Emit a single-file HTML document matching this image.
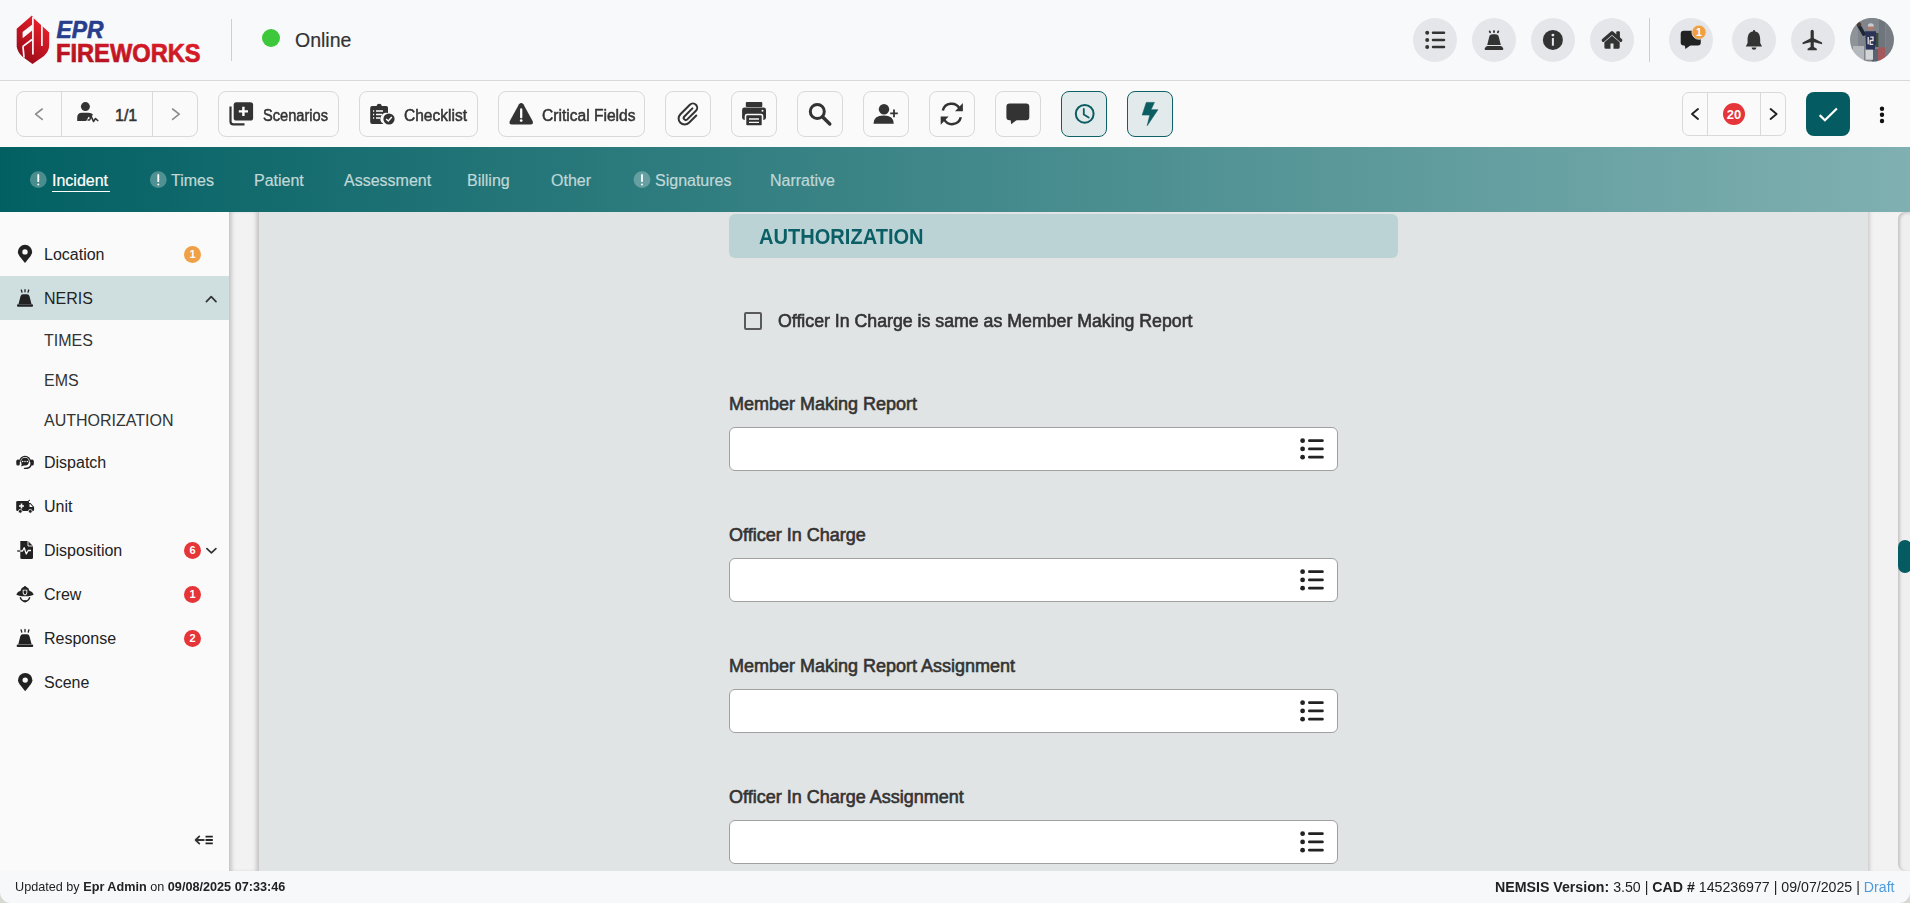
<!DOCTYPE html>
<html><head><meta charset="utf-8">
<style>
*{box-sizing:border-box;margin:0;padding:0}
html,body{width:1910px;height:903px;overflow:hidden;background:#d8d8d2;font-family:"Liberation Sans",sans-serif;color:#222}
.abs{position:absolute;white-space:nowrap;line-height:1}
#header{position:absolute;left:0;top:0;width:1910px;height:81px;background:#f8f9fb;border-bottom:1px solid #d9d9d9}
#toolbar{position:absolute;left:0;top:81px;width:1910px;height:66px;background:#fafafa}
#nav{position:absolute;left:0;top:147px;width:1910px;height:65px;background:linear-gradient(90deg,#026063 0%,#80b0b1 100%)}
#sidebar{position:absolute;left:0;top:212px;width:229px;height:659px;background:#fafafa}
#gutter{position:absolute;left:229px;top:212px;width:30px;height:659px;background:#f2f2f2;box-shadow:inset 5px 0 5px -3px #b9b9b9, inset -5px 0 5px -3px #b9b9b9}
#content{position:absolute;left:259px;top:212px;width:1609px;height:659px;background:#e0e4e5}
#rgutter{position:absolute;left:1868px;top:212px;width:42px;height:659px;background:#f2f2f2;box-shadow:inset 4px 0 4px -3px #bdbdbd}
#track{position:absolute;left:1898px;top:212px;width:16px;height:659px;border-radius:7px;background:#efefef;box-shadow:inset 2px 1px 3px 0 #c4c4c4}
#thumb{position:absolute;left:1898px;top:540px;width:14px;height:33px;border-radius:7px;background:#045c62}
#footer{position:absolute;left:0;top:871px;width:1910px;height:32px;background:#f7f8fa;border-radius:0 0 11px 11px}
.btn{position:absolute;top:91px;height:46px;border:1px solid #d9d9d9;border-radius:8px;background:#fafafa}
.tab{position:absolute;top:173px;font-size:16px;line-height:1;color:#c0d8d8;white-space:nowrap;-webkit-text-stroke:0.2px currentColor}
.side{position:absolute;left:44px;font-size:16px;line-height:1;color:#222;white-space:nowrap}
.sub{color:#333}
.lbl{position:absolute;left:729px;font-size:18px;line-height:1;color:#333;white-space:nowrap;-webkit-text-stroke:0.6px #333}
.inp{position:absolute;left:729px;width:609px;height:44px;background:#fff;border:1px solid #a0a0a0;border-radius:6px}
.circ{position:absolute;top:18px;width:44px;height:44px;border-radius:50%;background:#e4e6ea}
.bt{position:absolute;top:107.5px;font-size:16px;line-height:1;color:#333;white-space:nowrap;-webkit-text-stroke:0.5px #333;transform-origin:0 0}
.badge{position:absolute;width:17px;height:17px;border-radius:50%;color:#fff;font-size:11px;font-weight:700;line-height:17px;text-align:center}
</style></head><body>
<div id="header"></div>
<div id="toolbar"></div>
<div id="nav"></div>
<div id="sidebar"></div>
<div id="gutter"></div>
<div id="content"></div>
<div id="rgutter"></div>
<div id="track"></div>
<div id="thumb"></div>
<div id="footer"></div>

<!-- header -->
<div class="abs" style="left:231px;top:19px;width:1px;height:42px;background:#cfcfcf"></div>
<div class="abs" style="left:262px;top:29px;width:18px;height:18px;border-radius:50%;background:#3cc83a"></div>
<div class="abs" style="left:295px;top:30.5px;font-size:19.5px;color:#333;-webkit-text-stroke:0.2px #333">Online</div>
<div class="circ" style="left:1413px"></div>
<div class="circ" style="left:1472px"></div>
<div class="circ" style="left:1531px"></div>
<div class="circ" style="left:1590px"></div>
<div class="abs" style="left:1649px;top:18px;width:1px;height:44px;background:#cfcfcf"></div>
<div class="circ" style="left:1669px"></div>
<div class="circ" style="left:1732px"></div>
<div class="circ" style="left:1791px"></div>


<!-- toolbar -->
<div class="btn" style="left:16px;width:182px"></div>
<div class="abs" style="left:61px;top:91px;width:1px;height:46px;background:#d9d9d9"></div>
<div class="abs" style="left:152px;top:91px;width:1px;height:46px;background:#d9d9d9"></div>
<div class="btn" style="left:218px;width:121px"></div>
<div class="btn" style="left:359px;width:119px"></div>
<div class="btn" style="left:498px;width:147px"></div>
<div class="btn" style="left:665px;width:46px"></div>
<div class="btn" style="left:731px;width:46px"></div>
<div class="btn" style="left:797px;width:46px"></div>
<div class="btn" style="left:863px;width:46px"></div>
<div class="btn" style="left:929px;width:46px"></div>
<div class="btn" style="left:995px;width:46px"></div>
<div class="btn" style="left:1061px;width:46px;background:#e3eaeb;border:1.3px solid #0e6166"></div>
<div class="btn" style="left:1127px;width:46px;background:#e3eaeb;border:1.3px solid #0e6166"></div>
<div class="btn" style="left:1682px;top:92px;width:104px;height:43.5px;border-radius:7px"></div>
<div class="abs" style="left:1707px;top:92px;width:1px;height:43.5px;background:#d9d9d9"></div>
<div class="abs" style="left:1760px;top:92px;width:1px;height:43.5px;background:#d9d9d9"></div>
<div class="abs" style="left:1806px;top:92px;width:44px;height:44px;border-radius:8px;background:#045c62"></div>

<div class="bt" style="left:115px">1/1</div>
<div class="bt" style="left:262.5px;transform:scaleX(0.914)">Scenarios</div>
<div class="bt" style="left:404px;transform:scaleX(0.97)">Checklist</div>
<div class="bt" style="left:541.5px;transform:scaleX(0.974)">Critical Fields</div>

<!-- nav tabs -->
<div class="tab" style="left:52px;color:#fff">Incident</div>
<div class="abs" style="left:52px;top:190.8px;width:58px;height:1.6px;background:#fff"></div>
<div class="tab" style="left:171px">Times</div>
<div class="tab" style="left:254px">Patient</div>
<div class="tab" style="left:344px">Assessment</div>
<div class="tab" style="left:467px">Billing</div>
<div class="tab" style="left:551px">Other</div>
<div class="tab" style="left:655px">Signatures</div>
<div class="tab" style="left:770px">Narrative</div>

<!-- sidebar -->
<div class="abs" style="left:0;top:276px;width:229px;height:44px;background:#cfdfe0"></div>
<div class="side" style="top:247px">Location</div>
<div class="side" style="top:291px">NERIS</div>
<div class="side sub" style="top:333px">TIMES</div>
<div class="side sub" style="top:373px">EMS</div>
<div class="side sub" style="top:413px">AUTHORIZATION</div>
<div class="side" style="top:455px">Dispatch</div>
<div class="side" style="top:499px">Unit</div>
<div class="side" style="top:543px">Disposition</div>
<div class="side" style="top:587px">Crew</div>
<div class="side" style="top:631px">Response</div>
<div class="side" style="top:675px">Scene</div>
<div class="badge" style="left:184px;top:246px;background:#f0a045">1</div>
<div class="badge" style="left:184px;top:542px;background:#e53538">6</div>
<div class="badge" style="left:184px;top:586px;background:#e53538">1</div>
<div class="badge" style="left:184px;top:630px;background:#e53538">2</div>

<!-- content -->
<div class="abs" style="left:729px;top:214px;width:669px;height:44px;background:#bcd3d5;border-radius:6px"></div>
<div class="abs" style="left:759px;top:225.6px;font-size:22px;font-weight:700;color:#0a5f66;transform:scaleX(0.912);transform-origin:0 0">AUTHORIZATION</div>
<div class="abs" style="left:744px;top:312px;width:18px;height:18px;border:2px solid #5a5a5a;border-radius:2px"></div>
<div class="abs" style="left:778px;top:312px;font-size:18px;color:#333;-webkit-text-stroke:0.6px #333;transform:scaleX(0.985);transform-origin:0 0">Officer In Charge is same as Member Making Report</div>
<div class="lbl" style="top:395px">Member Making Report</div>
<div class="inp" style="top:427px"></div>
<div class="lbl" style="top:526px">Officer In Charge</div>
<div class="inp" style="top:558px"></div>
<div class="lbl" style="top:657px">Member Making Report Assignment</div>
<div class="inp" style="top:689px"></div>
<div class="lbl" style="top:788px">Officer In Charge Assignment</div>
<div class="inp" style="top:820px"></div>

<!-- footer -->
<div class="abs" style="left:15px;top:880px;font-size:13px;color:#222;transform:scaleX(0.973);transform-origin:0 0">Updated by <b>Epr Admin</b> on <b>09/08/2025 07:33:46</b></div>
<div class="abs" style="left:1495px;top:880px;font-size:14px;color:#222;transform:scaleX(1.0125);transform-origin:0 0"><b>NEMSIS Version:</b> 3.50 | <b>CAD #</b> 145236977 | 09/07/2025 | <span style="color:#4a9be0">Draft</span></div>

<!--ICONS-->
<svg class="abs" style="left:0;top:0" width="1910" height="903" viewBox="0 0 1910 903">
<defs>
<linearGradient id="lg1" x1="0.8" y1="0.1" x2="0.3" y2="0.9"><stop offset="0" stop-color="#ec1f2a"/><stop offset="1" stop-color="#9e0d1a"/></linearGradient>
<linearGradient id="lg2" x1="0" y1="1" x2="1" y2="0"><stop offset="0" stop-color="#a80f1e"/><stop offset="1" stop-color="#e61f2b"/></linearGradient>
</defs>
<!-- LOGO -->
<path d="M31.9,15.4 L16.7,28.7 L16.7,46.7 Q17.5,52 22.5,56.7 L32.5,64.1 L44,56 Q49.2,51 49.2,45.5 L49.2,32.5 L33.7,18.2 Z" fill="url(#lg1)"/>
<path d="M22.6,32 L32.2,24.4 L32.2,30.4 L22.6,38.2 Z" fill="#f8f9fb"/>
<path d="M32.9,17 V54.5 M22.6,46.6 L32,39.5 M23,46.6 L24,57.5 M41.9,24.4 V46.1" stroke="#f8f9fb" stroke-width="1.7" fill="none"/>
<text x="56.5" y="37.7" font-family="Liberation Sans" font-weight="700" font-style="italic" font-size="23" fill="#283e8c" stroke="#283e8c" stroke-width="0.6" textLength="47" lengthAdjust="spacingAndGlyphs">EPR</text>
<text x="56" y="61.8" font-family="Liberation Sans" font-weight="700" font-size="25" fill="url(#lg2)" stroke="url(#lg2)" stroke-width="0.7" textLength="144.6" lengthAdjust="spacingAndGlyphs">FIREWORKS</text>

<!-- TOOLBAR -->
<g fill="none" stroke="#8c8c8c" stroke-width="1.6" stroke-linecap="round" stroke-linejoin="round">
<polyline points="42.2,109 35.6,114.2 42.2,119.4"/>
<polyline points="172.6,109 179.2,114.2 172.6,119.4"/>
</g>
<g fill="#333">
<circle cx="85.4" cy="106.6" r="4.5"/>
<path d="M77.2,121 L77.2,117.5 Q77.2,112.7 82,112.7 L88.5,112.7 Q91.5,112.7 93,114.5 L90.5,118.2 L88.6,116.8 L86.2,121 Z"/>
</g>
<polyline points="87.5,120 89.5,120 91.3,116.5 93.5,121.5 95.5,118.5 98.2,121" fill="none" stroke="#333" stroke-width="1.6" stroke-linejoin="round"/>
<!-- scenarios -->
<rect x="233.7" y="102.2" width="19.4" height="18.4" rx="2.6" fill="#333"/>
<path d="M243.4,106.8 V116 M238.8,111.4 H248" stroke="#fff" stroke-width="2.4"/>
<path d="M230.5,106.5 V121.5 Q230.5,124.4 233.4,124.4 H244.5" stroke="#333" stroke-width="2.2" fill="none"/>
<!-- checklist -->
<path d="M372.2,106 H376.5 Q377,103.8 379.2,103.8 Q381.4,103.8 381.9,106 H386.2 Q388,106 388,107.8 V113 A6,6 0 0 0 383.5,124 H372.2 Q370.2,124 370.2,122 V108 Q370.2,106 372.2,106 Z" fill="#333"/>
<circle cx="389" cy="119" r="5.6" fill="#333"/>
<polyline points="386.2,119 388.3,121 391.8,117" fill="none" stroke="#fff" stroke-width="1.5"/>
<path d="M373,111 H374.2 M376,111 H383 M373,114.5 H374.2 M376,114.5 H382 M373,118 H374.2 M376,118 H380.5" stroke="#fff" stroke-width="1.4"/>
<!-- triangle -->
<path d="M519,104.3 Q521.2,101.5 523.4,104.3 L532.6,121 Q533.8,124.5 530.5,124.5 H511.9 Q508.6,124.5 509.8,121 Z" fill="#333"/>
<path d="M521.2,109.5 V117.3" stroke="#fff" stroke-width="2.3" stroke-linecap="round"/>
<circle cx="521.2" cy="120.6" r="1.35" fill="#fff"/>
<!-- paperclip -->
<path transform="translate(688.8,114.4) rotate(45)" d="M-1.7,-6.8 V4.6 A2.07,2.07 0 0 0 2.44,4.6 V-7.63 A4.27,4.27 0 0 0 -6.1,-7.63 V5.8 A6.1,6.1 0 0 0 6.1,5.8 V-4.5" fill="none" stroke="#333" stroke-width="2" stroke-linecap="round"/>
<!-- print -->
<rect x="745.8" y="102" width="16.5" height="5" rx="1" fill="#333"/>
<rect x="742.1" y="107.5" width="23.9" height="12.5" rx="2.4" fill="#333"/>
<rect x="745.5" y="114.5" width="17" height="11.5" rx="1.5" fill="#333" stroke="#fafafa" stroke-width="1.6"/>
<path d="M749,119 H759 M749,122.3 H759" stroke="#fafafa" stroke-width="1.3"/>
<circle cx="762.5" cy="110.8" r="1" fill="#fafafa"/>
<!-- search -->
<circle cx="817.3" cy="111.5" r="7" fill="none" stroke="#333" stroke-width="3"/>
<path d="M822.7,117 L829.8,124" stroke="#333" stroke-width="3.4" stroke-linecap="round"/>
<!-- user plus -->
<circle cx="884" cy="109.2" r="5.2" fill="#333"/>
<path d="M873.5,123.8 Q873.5,115.6 883.6,115.6 Q893.8,115.6 893.8,123.8 Z" fill="#333"/>
<path d="M894,109.5 V117.2 M890.2,113.3 H897.8" stroke="#333" stroke-width="1.8"/>
<!-- sync -->
<g fill="none" stroke="#333" stroke-width="2.5">
<path d="M942.8,110.5 A9,9 0 0 1 959.5,108.5"/>
<path d="M960.8,117.3 A9,9 0 0 1 944.2,119.5"/>
</g>
<path d="M962.9,103 V111.2 H955 Z" fill="#333"/>
<path d="M940.7,124.7 V116.6 H948.6 Z" fill="#333"/>
<!-- comment -->
<rect x="1006.4" y="103.5" width="22.9" height="16.8" rx="3.2" fill="#333"/>
<path d="M1010.5,119 H1018 L1011.2,124.2 Z" fill="#333"/>
<!-- clock -->
<circle cx="1084.7" cy="113.8" r="8.9" fill="none" stroke="#0b5d62" stroke-width="2"/>
<polyline points="1083.8,109 1083.8,114.6 1088.7,117.6" fill="none" stroke="#0b5d62" stroke-width="1.8" stroke-linecap="round"/>
<!-- bolt -->
<path d="M1146.3,102.4 L1154.4,102.4 L1151,109.7 L1157.9,109.7 L1147.2,125.7 L1149.8,115 L1142.2,115 Z" fill="#0b5d62" stroke="#0b5d62" stroke-width="0.6" stroke-linejoin="round"/>
<!-- right pager -->
<g fill="none" stroke="#222" stroke-width="1.9" stroke-linecap="round" stroke-linejoin="round">
<polyline points="1698,109 1692,114 1698,119"/>
<polyline points="1770.6,109 1776.6,114 1770.6,119"/>
</g>
<circle cx="1734" cy="114" r="11" fill="#e6353a"/>
<text x="1734" y="118.6" text-anchor="middle" font-family="Liberation Sans" font-weight="700" font-size="13" fill="#fff">20</text>
<polyline points="1819.7,115.1 1824.9,120.3 1836.9,108.5" fill="none" stroke="#fff" stroke-width="2.2"/>
<g fill="#111"><circle cx="1882" cy="108.7" r="2.2"/><circle cx="1882" cy="114.8" r="2.2"/><circle cx="1882" cy="121" r="2.2"/></g>

<!-- HEADER ICONS -->
<g fill="#333">
<circle cx="1427.2" cy="32.8" r="2"/><circle cx="1427.2" cy="39.9" r="2"/><circle cx="1427.2" cy="46.9" r="2"/>
</g>
<path d="M1433,32.8 H1444 M1433,39.9 H1444 M1433,46.9 H1444" stroke="#333" stroke-width="2.5" stroke-linecap="round"/>
<!-- siren -->
<path d="M1489.2,37 Q1489.6,34.2 1492.6,34.2 H1495.4 Q1498.4,34.2 1498.8,37 L1500.8,44.9 H1487.2 Z" fill="#333"/>
<path d="M1485.2,49.9 H1502.8 Q1503.4,49.9 1503.2,48.6 Q1502.6,46.1 1500.6,46.1 H1487.4 Q1485.4,46.1 1484.8,48.6 Q1484.6,49.9 1485.2,49.9 Z" fill="#333"/>
<g fill="#333"><ellipse cx="1489.9" cy="31.9" rx="0.95" ry="1.5" transform="rotate(-25 1489.9 31.9)"/><ellipse cx="1494" cy="31.6" rx="0.95" ry="1.5"/><ellipse cx="1498.1" cy="31.9" rx="0.95" ry="1.5" transform="rotate(25 1498.1 31.9)"/></g>
<!-- info -->
<circle cx="1552.9" cy="39.9" r="10" fill="#333"/>
<circle cx="1552.9" cy="35.1" r="1.45" fill="#e4e6ea"/>
<rect x="1551.9" y="38" width="2" height="7.7" fill="#e4e6ea"/>
<!-- house -->
<rect x="1616.3" y="31.2" width="3.6" height="7" rx="1" fill="#333"/>
<polyline points="1603.3,40.3 1612,32.8 1620.7,40.3" fill="none" stroke="#333" stroke-width="3.3" stroke-linejoin="round" stroke-linecap="round"/>
<path d="M1604.4,42.2 L1612,35.8 L1619.7,42.2 V47.2 Q1619.7,48.7 1618.2,48.7 H1613.5 V43.5 H1610.5 V48.7 H1605.9 Q1604.4,48.7 1604.4,47.2 Z" fill="#333"/>
<!-- comment badge -->
<rect x="1680.7" y="30.7" width="20.1" height="14.8" rx="3" fill="#222"/>
<path d="M1684.5,44.5 H1691.5 L1685.5,48.9 Z" fill="#222"/>
<circle cx="1699" cy="32.2" r="7.1" fill="#f0a040" stroke="#e4e6ea" stroke-width="0.8"/>
<text x="1699" y="36" text-anchor="middle" font-family="Liberation Sans" font-weight="700" font-size="10.5" fill="#fff">1</text>
<!-- bell -->
<path d="M1754,31.3 C1758.8,31.3 1760.2,35.3 1760.2,39.5 V43 L1762,46.5 H1745.8 L1747.6,43 V39.5 C1747.6,35.3 1749.2,31.3 1754,31.3 Z" fill="#333"/>
<rect x="1753" y="29.9" width="2" height="2.5" rx="0.8" fill="#333"/>
<path d="M1751.6,47.4 A2.4,2.4 0 0 0 1756.4,47.4 Z" fill="#333"/>
<!-- plane -->
<rect x="1810.6" y="29.8" width="3.2" height="19" rx="1.6" fill="#333"/>
<path d="M1812.2,37.5 L1822.1,42.6 V44.3 L1812.2,41.8 L1802.6,44.3 V42.6 Z" fill="#333"/>
<path d="M1812.2,46 L1816.8,48.8 V50.2 H1807.6 V48.8 Z" fill="#333"/>

<!-- avatar -->
<clipPath id="avc"><circle cx="1872" cy="39.8" r="22"/></clipPath>
<filter id="avb" x="-10%" y="-10%" width="120%" height="120%"><feGaussianBlur stdDeviation="0.7"/></filter>
<g clip-path="url(#avc)"><g filter="url(#avb)">
<rect x="1850" y="17.8" width="44" height="44" fill="#7f858b"/>
<rect x="1850" y="17.8" width="8" height="44" fill="#8e9397"/>
<rect x="1879" y="17.8" width="6" height="30" fill="#6e757d"/>
<rect x="1886" y="17.8" width="8" height="44" fill="#767c82"/>
<rect x="1853" y="46" width="11" height="16" fill="#b5b9bd"/>
<rect x="1878" y="47.4" width="7.5" height="14" fill="#a4585c"/>
<rect x="1872" y="49" width="6" height="13" fill="#5a6372"/>
<path d="M1865,31.3 L1875.9,31.3 L1877.1,38.8 L1874.8,49.7 L1866.1,49.7 L1865.6,38.8 Z" fill="#2a3358"/>
<path d="M1863.8,34 L1858.6,25" stroke="#1f2536" stroke-width="3.6" stroke-linecap="round"/>
<circle cx="1859" cy="24.4" r="2.2" fill="#4a3a32"/>
<circle cx="1870.8" cy="27.6" r="2.9" fill="#b07a6c"/>
<path d="M1867.8,26.5 A3,3.2 0 0 1 1873.8,26.5 Z" fill="#c9cdd2"/>
<path d="M1868.2,37 V44.3 M1870.2,37.2 H1873 V40.5 H1870.2 V44.3 H1873.2" stroke="#e8e2e0" stroke-width="1.3" fill="none"/>
<rect x="1865.5" y="49.7" width="7.5" height="10" fill="#d2d4d6"/>
<rect x="1876" y="33" width="2.5" height="14" fill="#3a4a3c"/>
</g></g>
<!-- SIDEBAR ICONS -->
<g fill="#222">
<path d="M25,263.1 L19.6,256.2 Q17.8,253.8 17.8,252 A7.2,7.2 0 0 1 32.2,252 Q32.2,253.8 30.4,256.2 Z"/>
<path d="M25.2,691.3 L19.8,684.4 Q18,682 18,680.2 A7.2,7.2 0 0 1 32.4,680.2 Q32.4,682 30.6,684.4 Z"/>
</g>
<circle cx="25" cy="251.9" r="2.7" fill="#fafafa"/>
<circle cx="25.2" cy="680.1" r="2.7" fill="#fafafa"/>
<!-- siren NERIS -->
<path d="M20.5,296.3 Q21,294.3 23,294.3 H27 Q29,294.3 29.5,296.3 L31.5,304 H18.5 Z" fill="#222"/>
<rect x="17" y="304.3" width="16" height="2.4" rx="1" fill="#222"/>
<path d="M22,292.2 L21.3,290 M25,291.8 V289.6 M28,292.2 L28.7,290" stroke="#222" stroke-width="1.3" stroke-linecap="round"/>
<!-- siren response -->
<path d="M20.3,636.3 Q20.8,634.3 22.8,634.3 H27 Q29,634.3 29.5,636.3 L31.6,644.3 H18.3 Z" fill="#222"/>
<rect x="16.7" y="644.5" width="16.5" height="2.4" rx="1" fill="#222"/>
<path d="M21.8,632.2 L21.1,629.8 M25,631.8 V629.3 M28.2,632.2 L28.9,629.8" stroke="#222" stroke-width="1.3" stroke-linecap="round"/>
<!-- dispatch headset -->
<path d="M19.7,462 A5.35,5.6 0 0 1 30.4,462" fill="none" stroke="#222" stroke-width="1.3"/>
<rect x="16.3" y="459.6" width="3.5" height="6" rx="1.6" fill="#222"/>
<rect x="30.3" y="459.6" width="3.5" height="6" rx="1.6" fill="#222"/>
<circle cx="25" cy="461.6" r="3.9" fill="#222"/>
<path d="M21.8,463.5 L21.2,466.6 L24.3,465.2 Z" fill="#222"/>
<g fill="#fafafa"><circle cx="22.7" cy="461.6" r="0.75"/><circle cx="25" cy="461.6" r="0.75"/><circle cx="27.3" cy="461.6" r="0.75"/></g>
<path d="M31,465 Q30.2,468.4 24.5,468.4" fill="none" stroke="#222" stroke-width="1.4" stroke-linecap="round"/>
<!-- ambulance -->
<path d="M17.5,501 H27.5 Q28.5,501 28.5,502 V503 H30.5 L34.1,507 V510 Q34.1,511 33,511 H17.5 Q16.2,511 16.2,510 V502 Q16.2,501 17.5,501 Z" fill="#222"/>
<path d="M28.5,503 V501.5 Q28.5,499.8 30,500.3" stroke="#222" stroke-width="1" fill="none"/>
<path d="M29.5,504 H30.2 L32.8,507 H29.5 Z" fill="#fafafa"/>
<path d="M21.5,503.5 V508.5 M19,506 H24" stroke="#fafafa" stroke-width="1.6"/>
<circle cx="20.3" cy="511.3" r="1.9" fill="#222" stroke="#fafafa" stroke-width="0.8"/>
<circle cx="30.3" cy="511.3" r="1.9" fill="#222" stroke="#fafafa" stroke-width="0.8"/>
<!-- file waveform -->
<path d="M20.3,541 H28 L33,546 V557.5 Q33,559 31.5,559 H21.8 Q20.3,559 20.3,557.5 Z" fill="#222"/>
<path d="M28,541 V546 H33" fill="none" stroke="#fafafa" stroke-width="0.9"/>
<polyline points="17.2,551 22.5,551 24.2,547.8 26.3,554 28.2,550.5 31,550.5" fill="none" stroke="#fafafa" stroke-width="1.3" stroke-linejoin="round"/>
<path d="M17.2,551 H20.3" stroke="#222" stroke-width="1.3"/>
<!-- crew helmet -->
<path d="M16.3,594.5 Q17.5,591.5 20.6,590.8 Q21.2,587.8 23.5,587 L26.5,587 Q28.8,587.8 29.4,590.8 Q32.5,591.5 33.7,594.5 Q32,596.3 25,596.3 Q18,596.3 16.3,594.5 Z" fill="#222"/>
<path d="M22.7,589.8 H27.3 V592.8 Q27.3,595 25,595.5 Q22.7,595 22.7,592.8 Z" fill="#fafafa"/>
<path d="M23.6,590.6 H26.4 V592.6 Q26.4,594 25,594.4 Q23.6,594 23.6,592.6 Z" fill="#222"/>
<circle cx="25" cy="587.2" r="1.2" fill="#222"/>
<path d="M20.2,597.2 Q21.5,601.2 25,601.2 Q28.5,601.2 29.8,597.2" fill="none" stroke="#222" stroke-width="1.4"/>
<ellipse cx="25" cy="601.3" rx="1.9" ry="1.1" fill="#222"/>
<!-- chevrons -->
<g fill="none" stroke="#333" stroke-width="1.7" stroke-linecap="round" stroke-linejoin="round">
<polyline points="206.4,301.6 211.2,296.6 216,301.6"/>
<polyline points="206.9,548.6 211.4,552.8 215.9,548.6"/>
</g>
<!-- collapse -->
<path d="M203.8,840 H196 M199.3,836.4 L195.6,840 L199.3,843.6" fill="none" stroke="#333" stroke-width="1.8" stroke-linecap="round" stroke-linejoin="round"/>
<path d="M205.5,836.6 H212.8 M205.5,840 H212.8 M205.5,843.4 H212.8" stroke="#222" stroke-width="1.9"/>

<!-- NAV ! -->
<g fill="rgba(255,255,255,0.28)">
<circle cx="38.3" cy="179.6" r="8.4"/><circle cx="158.3" cy="179.6" r="8.4"/><circle cx="642" cy="179.6" r="8.4"/>
</g>
<g stroke="#fff" stroke-width="1.8" stroke-linecap="round"><path d="M38.3,175 V181.2 M158.3,175 V181.2 M642,175 V181.2"/></g>
<g fill="#fff"><circle cx="38.3" cy="184.4" r="1"/><circle cx="158.3" cy="184.4" r="1"/><circle cx="642" cy="184.4" r="1"/></g>

<!-- INPUT LIST ICONS -->
<g id="li">
<g fill="#222"><circle cx="1302.6" cy="440.7" r="2.4"/><circle cx="1302.6" cy="448.9" r="2.4"/><circle cx="1302.6" cy="457.2" r="2.4"/></g>
<path d="M1309.4,440.7 H1322.4 M1309.4,448.9 H1322.4 M1309.4,457.2 H1322.4" stroke="#222" stroke-width="2.8" stroke-linecap="round"/>
</g>
<use href="#li" transform="translate(0,131)"/>
<use href="#li" transform="translate(0,262)"/>
<use href="#li" transform="translate(0,393)"/>
</svg>

</body></html>
